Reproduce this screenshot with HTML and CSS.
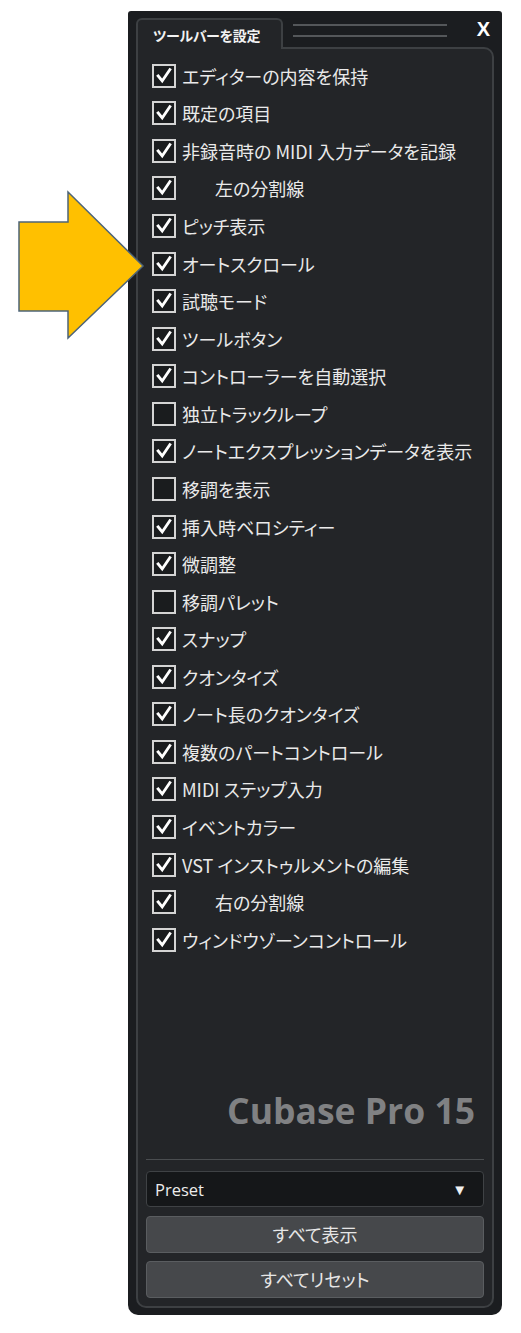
FILE: index.html
```html
<!DOCTYPE html>
<html lang="ja">
<head>
<meta charset="utf-8">
<title>ツールバーを設定</title>
<link rel="stylesheet" href="styles.css">
</head>
<body>
<div class="panel">
  <div class="head">
    <div class="tab">ツールバーを設定</div>
    <div class="grip"><span></span><span></span></div>
    <div class="close">X</div>
  </div>
  <div class="frame">
    <ul class="list">
      <li><span class="cb"><svg viewBox="0 0 20 20"><polyline points="3.5,10 8,15.5 16.5,3"/></svg></span><span class="lbl">エディターの内容を保持</span></li>
      <li><span class="cb"><svg viewBox="0 0 20 20"><polyline points="3.5,10 8,15.5 16.5,3"/></svg></span><span class="lbl">既定の項目</span></li>
      <li><span class="cb"><svg viewBox="0 0 20 20"><polyline points="3.5,10 8,15.5 16.5,3"/></svg></span><span class="lbl">非録音時の MIDI 入力データを記録</span></li>
      <li><span class="cb"><svg viewBox="0 0 20 20"><polyline points="3.5,10 8,15.5 16.5,3"/></svg></span><span class="lbl indent">左の分割線</span></li>
      <li><span class="cb"><svg viewBox="0 0 20 20"><polyline points="3.5,10 8,15.5 16.5,3"/></svg></span><span class="lbl">ピッチ表示</span></li>
      <li><span class="cb"><svg viewBox="0 0 20 20"><polyline points="3.5,10 8,15.5 16.5,3"/></svg></span><span class="lbl">オートスクロール</span></li>
      <li><span class="cb"><svg viewBox="0 0 20 20"><polyline points="3.5,10 8,15.5 16.5,3"/></svg></span><span class="lbl">試聴モード</span></li>
      <li><span class="cb"><svg viewBox="0 0 20 20"><polyline points="3.5,10 8,15.5 16.5,3"/></svg></span><span class="lbl">ツールボタン</span></li>
      <li><span class="cb"><svg viewBox="0 0 20 20"><polyline points="3.5,10 8,15.5 16.5,3"/></svg></span><span class="lbl">コントローラーを自動選択</span></li>
      <li><span class="cb"></span><span class="lbl">独立トラックループ</span></li>
      <li><span class="cb"><svg viewBox="0 0 20 20"><polyline points="3.5,10 8,15.5 16.5,3"/></svg></span><span class="lbl">ノートエクスプレッションデータを表示</span></li>
      <li><span class="cb"></span><span class="lbl">移調を表示</span></li>
      <li><span class="cb"><svg viewBox="0 0 20 20"><polyline points="3.5,10 8,15.5 16.5,3"/></svg></span><span class="lbl">挿入時ベロシティー</span></li>
      <li><span class="cb"><svg viewBox="0 0 20 20"><polyline points="3.5,10 8,15.5 16.5,3"/></svg></span><span class="lbl">微調整</span></li>
      <li><span class="cb"></span><span class="lbl">移調パレット</span></li>
      <li><span class="cb"><svg viewBox="0 0 20 20"><polyline points="3.5,10 8,15.5 16.5,3"/></svg></span><span class="lbl">スナップ</span></li>
      <li><span class="cb"><svg viewBox="0 0 20 20"><polyline points="3.5,10 8,15.5 16.5,3"/></svg></span><span class="lbl">クオンタイズ</span></li>
      <li><span class="cb"><svg viewBox="0 0 20 20"><polyline points="3.5,10 8,15.5 16.5,3"/></svg></span><span class="lbl">ノート長のクオンタイズ</span></li>
      <li><span class="cb"><svg viewBox="0 0 20 20"><polyline points="3.5,10 8,15.5 16.5,3"/></svg></span><span class="lbl">複数のパートコントロール</span></li>
      <li><span class="cb"><svg viewBox="0 0 20 20"><polyline points="3.5,10 8,15.5 16.5,3"/></svg></span><span class="lbl">MIDI ステップ入力</span></li>
      <li><span class="cb"><svg viewBox="0 0 20 20"><polyline points="3.5,10 8,15.5 16.5,3"/></svg></span><span class="lbl">イベントカラー</span></li>
      <li><span class="cb"><svg viewBox="0 0 20 20"><polyline points="3.5,10 8,15.5 16.5,3"/></svg></span><span class="lbl">VST インストゥルメントの編集</span></li>
      <li><span class="cb"><svg viewBox="0 0 20 20"><polyline points="3.5,10 8,15.5 16.5,3"/></svg></span><span class="lbl indent">右の分割線</span></li>
      <li><span class="cb"><svg viewBox="0 0 20 20"><polyline points="3.5,10 8,15.5 16.5,3"/></svg></span><span class="lbl">ウィンドウゾーンコントロール</span></li>
    </ul>
    <div class="brand">Cubase Pro 15</div>
    <div class="sep"></div>
    <div class="select"><span>Preset</span><span class="tri">▼</span></div>
    <div class="btn">すべて表示</div>
    <div class="btn">すべてリセット</div>
  </div>
</div>
<svg class="arrow" width="160" height="350" viewBox="0 0 160 350">
  <polygon points="19,222 68,222 68,192 143,266 68,338 68,311 19,311"/>
</svg>
</body>
</html>
```
FILE: styles.css
```css
html, body {
  margin: 0;
  padding: 0;
  background: #ffffff;
}
body {
  position: relative;
  padding: 11px 0 0 128px;
  font-family: "Noto Sans CJK JP", "Noto Sans", sans-serif;
}
.panel {
  width: 374px;
  height: 1304px;
  box-sizing: border-box;
  background: #1b1d20;
  border-radius: 3px 3px 10px 10px;
  padding: 7px 8px 7px 8px;
  display: flex;
  flex-direction: column;
}
.head {
  display: flex;
  align-items: flex-start;
  position: relative;
  z-index: 2;
}
.tab {
  width: 147px;
  height: 31px;
  box-sizing: border-box;
  margin-bottom: -2px;
  background: #232528;
  border: 2px solid #3d4043;
  border-bottom: none;
  border-radius: 6px 6px 0 0;
  color: #f2f2f2;
  font-size: 14px;
  font-weight: 700;
  line-height: 20px;
  padding: 5px 0 0 15px;
  font-feature-settings: "palt";
  letter-spacing: -0.3px;
}
.grip {
  width: 154px;
  margin: 6px 0 0 10px;
  display: flex;
  flex-direction: column;
  gap: 9px;
}
.grip span {
  display: block;
  height: 2px;
  background: #54575a;
}
.close {
  margin-left: auto;
  margin-right: 4px;
  margin-top: 1px;
  font-family: "Liberation Sans", sans-serif;
  font-weight: 700;
  font-size: 20px;
  line-height: 20px;
  color: #ffffff;
}
.frame {
  flex: 1;
  display: flex;
  flex-direction: column;
  background: #232528;
  border: 2px solid #3d4043;
  border-radius: 0 10px 10px 10px;
  padding: 8px;
}
.list {
  list-style: none;
  margin: 0;
  padding: 0 0 0 6px;
}
.list li {
  height: 37.57px;
  display: flex;
  align-items: center;
}
.cb {
  width: 24px;
  height: 24px;
  box-sizing: border-box;
  border: 2.5px solid #d4d4d4;
  background: #1a1c1e;
  flex: none;
  display: flex;
  align-items: center;
  justify-content: center;
}
.cb svg {
  width: 18px;
  height: 18px;
  display: block;
}
.cb polyline {
  fill: none;
  stroke: #ffffff;
  stroke-width: 3.2;
  stroke-linecap: square;
  stroke-linejoin: miter;
}
.lbl {
  margin-left: 6px;
  font-size: 18px;
  line-height: 24px;
  color: #eaeaea;
  font-feature-settings: "palt";
  white-space: nowrap;
}
.lbl.indent {
  padding-left: 33px;
}
.brand {
  margin-top: auto;
  text-align: right;
  padding-right: 9px;
  font-family: "Open Sans", sans-serif;
  font-weight: 700;
  font-size: 35.5px;
  line-height: 40px;
  color: #808183;
  margin-bottom: 29px;
}
.sep {
  height: 1px;
  background: #4a4d50;
  margin-bottom: 11px;
}
.select {
  height: 36px;
  box-sizing: border-box;
  background: #151719;
  border: 1px solid #3f4245;
  border-radius: 4px;
  display: flex;
  align-items: center;
  justify-content: space-between;
  padding: 0 16px 0 8px;
  color: #ececec;
  font-family: "Open Sans", sans-serif;
  font-size: 16.5px;
  margin-bottom: 9px;
}
.tri {
  font-size: 15px;
  color: #f0f0f0;
}
.btn {
  height: 37px;
  box-sizing: border-box;
  background: #46484b;
  border: 1px solid #5a5d60;
  border-radius: 4px;
  color: #e6e6e6;
  font-size: 18px;
  line-height: 35px;
  text-align: center;
  font-feature-settings: "palt";
}
.btn + .btn {
  margin-top: 8px;
}
.arrow {
  position: absolute;
  left: 0;
  top: 0;
  z-index: 5;
}
.arrow polygon {
  fill: #ffc000;
  stroke: #4d6478;
  stroke-width: 1.5;
}
```
